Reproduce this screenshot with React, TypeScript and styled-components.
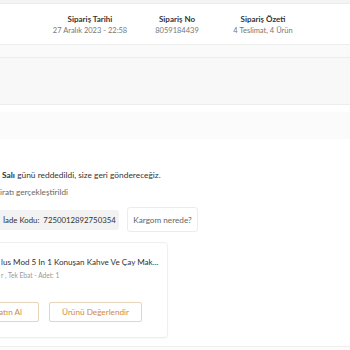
import styled, { createGlobalStyle } from "styled-components";

const GlobalStyle = createGlobalStyle`
  html, body {
    margin: 0;
    padding: 0;
    background: #fafafa;
  }
  body {
    font-family: "Lato", "Liberation Sans", sans-serif;
    color: #333;
    overflow: hidden;
  }
`;

const Page = styled.div`
  width: 350px;
  height: 350px;
  overflow: hidden;
  background: #fafafa;
`;

const TopStrip = styled.div`
  height: 3px;
  background: #f4f4f4;
  border-bottom: 1px solid #ececec;
`;

const OrderHeader = styled.header`
  height: 40px;
  background: #fff;
  border-bottom: 1px solid #eeeeee;
  display: grid;
  grid-template-columns: 48px 84px 90px 82px 1fr;
  align-items: center;
`;

const InfoCol = styled.div<{ $col: number }>`
  grid-column: ${(p) => p.$col};
  display: flex;
  flex-direction: column;
  align-items: center;
  gap: 2px;
  white-space: nowrap;
`;

const InfoTitle = styled.span`
  font-size: 8px;
  font-weight: 700;
  color: #333;
`;

const InfoValue = styled.span`
  font-size: 7.5px;
  color: #777;
`;

const Gap = styled.div<{ $h: number }>`
  height: ${(p) => p.$h}px;
`;

const GrayPanel = styled.div`
  height: 46px;
  background: #f8f8f8;
  border-top: 1px solid #ededed;
  border-bottom: 1px solid #ededed;
`;

const Body = styled.section`
  background: #fff;
  padding-top: 7px;
`;

const SubBand = styled.div`
  height: 27px;
  background: #fbfbfb;
`;

const Delivery = styled.div`
  margin-left: -10px;
  padding-top: 30px;
  display: flex;
  flex-direction: column;
`;

const StatusText = styled.p`
  margin: 0;
  padding-left: 12px;
  font-size: 8.4px;
  line-height: 12px;
  color: #333;
  white-space: nowrap;

  b {
    font-weight: 700;
  }
`;

const NoteText = styled.p`
  margin: 5px 0 0;
  padding-left: 10px;
  font-size: 8.2px;
  line-height: 12px;
  color: #666;
  white-space: nowrap;
`;

const ActionRow = styled.div`
  margin-top: 9px;
  display: flex;
  align-items: center;
  gap: 8px;
`;

const ReturnCode = styled.div`
  box-sizing: border-box;
  width: 129px;
  height: 20px;
  padding-left: 13px;
  background: #f2f2f2;
  border-radius: 3px;
  display: flex;
  align-items: center;
  font-size: 7.8px;
  color: #333;
  white-space: nowrap;
`;

const TrackButton = styled.button`
  height: 25px;
  width: 71px;
  background: #fff;
  border: 1px solid #ececec;
  border-radius: 3px;
  font-family: inherit;
  font-size: 8.2px;
  color: #666;
  padding: 0;
`;

const ProductCard = styled.div`
  margin-top: 10px;
  width: 178px;
  height: 96px;
  box-sizing: border-box;
  padding: 13px 0 0 10px;
  background: #fff;
  border: 1px solid #efefef;
  border-radius: 4px;
  box-shadow: 0 1px 2px rgba(0, 0, 0, 0.04);
  display: flex;
  flex-direction: column;
`;

const ProductTitle = styled.div`
  font-size: 8.1px;
  line-height: 12px;
  color: #333;
  white-space: nowrap;
`;

const ProductMeta = styled.div`
  margin-top: 2px;
  font-size: 6.6px;
  line-height: 10px;
  color: #999;
  white-space: nowrap;
`;

const CardButtons = styled.div`
  margin-top: 22px;
  margin-left: -10px;
  display: flex;
  gap: 10px;
`;

const OutlineButton = styled.button<{ $w: number; $pr?: number }>`
  box-sizing: border-box;
  width: ${(p) => p.$w}px;
  height: 20px;
  padding: 0 ${(p) => p.$pr ?? 0}px 0 0;
  text-align: ${(p) => (p.$pr ? "right" : "center")};
  background: #fff;
  border: 1px solid #e8d3bb;
  border-radius: 2px;
  font-family: inherit;
  font-size: 8.2px;
  color: #cf8b45;
  white-space: nowrap;
`;

const BottomLine = styled.div`
  margin-top: 8px;
  border-top: 1px solid #eeeeee;
  height: 10px;
  background: #fcfcfc;
`;

export default function App() {
  return (
    <Page>
      <GlobalStyle />
      <TopStrip />
      <OrderHeader>
        <InfoCol $col={2}>
          <InfoTitle>Sipariş Tarihi</InfoTitle>
          <InfoValue>27 Aralık 2023 - 22:58</InfoValue>
        </InfoCol>
        <InfoCol $col={3}>
          <InfoTitle>Sipariş No</InfoTitle>
          <InfoValue>8059184439</InfoValue>
        </InfoCol>
        <InfoCol $col={4}>
          <InfoTitle>Sipariş Özeti</InfoTitle>
          <InfoValue>4 Teslimat, 4 Ürün</InfoValue>
        </InfoCol>
      </OrderHeader>
      <Gap $h={12} />
      <GrayPanel />
      <Body>
        <SubBand />
        <Delivery>
          <StatusText>
            <b>Salı</b> günü reddedildi, size geri göndereceğiz.
          </StatusText>
          <NoteText>iratı gerçekleştirildi</NoteText>
          <ActionRow>
            <ReturnCode>İade Kodu:&nbsp; 7250012892750354</ReturnCode>
            <TrackButton>Kargom nerede?</TrackButton>
          </ActionRow>
          <ProductCard>
            <ProductTitle>lus Mod 5 In 1 Konuşan Kahve Ve Çay Mak...</ProductTitle>
            <ProductMeta>r , Tek Ebat - Adet: 1</ProductMeta>
            <CardButtons>
              <OutlineButton $w={48} $pr={16}>atın Al</OutlineButton>
              <OutlineButton $w={93}>Ürünü Değerlendir</OutlineButton>
            </CardButtons>
          </ProductCard>
        </Delivery>
        <BottomLine />
      </Body>
    </Page>
  );
}
